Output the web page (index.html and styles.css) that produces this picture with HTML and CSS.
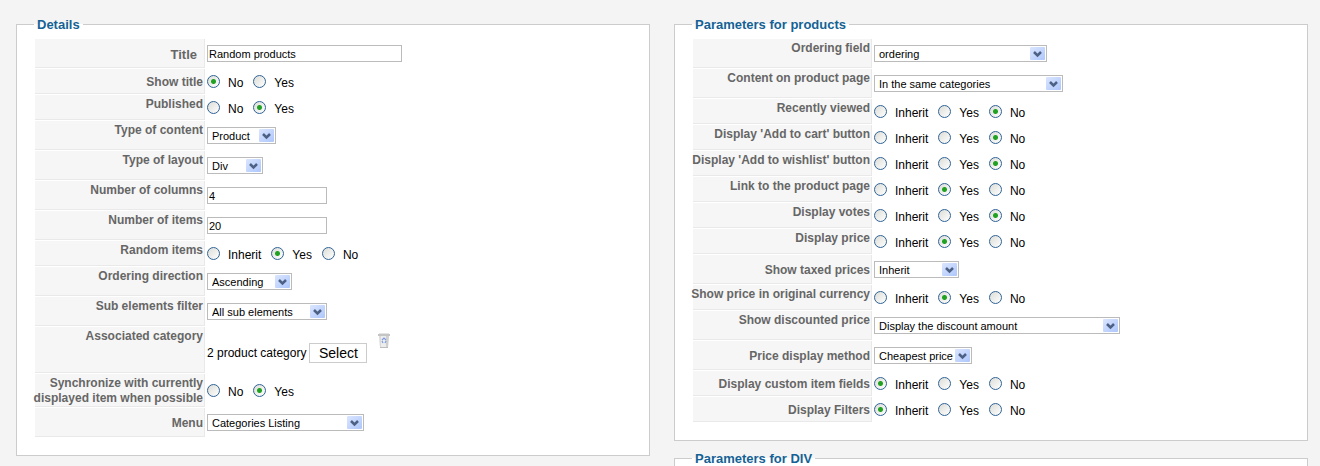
FILE: index.html
```html
<!DOCTYPE html>
<html lang="en">
<head>
  <meta charset="UTF-8">
  <meta name="viewport" content="width=device-width, initial-scale=1.0">
  <title>Module settings</title>
  <link rel="stylesheet" href="styles.css">
</head>
<body>
  <form class="columns">
    <div class="column">
      <fieldset class="panel details">
        <legend>Details</legend>
        <div class="params">
          <div class="row tall">
            <label class="key middle title-key" for="title">Title</label>
            <div class="value"><input class="text w-title" type="text" id="title" value="Random products"></div>
          </div>
          <div class="row" role="radiogroup" aria-labelledby="k-showtitle">
            <div class="key middle" id="k-showtitle">Show title</div>
            <div class="value">
              <label class="radio"><input type="radio" name="showtitle" checked><span>No</span></label>
              <label class="radio"><input type="radio" name="showtitle"><span>Yes</span></label>
            </div>
          </div>
          <div class="row" role="radiogroup" aria-labelledby="k-published">
            <div class="key" id="k-published">Published</div>
            <div class="value">
              <label class="radio"><input type="radio" name="published"><span>No</span></label>
              <label class="radio"><input type="radio" name="published" checked><span>Yes</span></label>
            </div>
          </div>
          <div class="row tall">
            <label class="key" for="content">Type of content</label>
            <div class="value"><select class="w-content" id="content"><option>Product</option></select></div>
          </div>
          <div class="row tall">
            <label class="key" for="layout">Type of layout</label>
            <div class="value"><select class="w-layout" id="layout"><option>Div</option></select></div>
          </div>
          <div class="row tall">
            <label class="key" for="columns">Number of columns</label>
            <div class="value"><input class="text" type="text" id="columns" value="4"></div>
          </div>
          <div class="row tall">
            <label class="key" for="items">Number of items</label>
            <div class="value"><input class="text" type="text" id="items" value="20"></div>
          </div>
          <div class="row" role="radiogroup" aria-labelledby="k-random">
            <div class="key" id="k-random">Random items</div>
            <div class="value">
              <label class="radio"><input type="radio" name="random"><span>Inherit</span></label>
              <label class="radio"><input type="radio" name="random" checked><span>Yes</span></label>
              <label class="radio"><input type="radio" name="random"><span>No</span></label>
            </div>
          </div>
          <div class="row tall">
            <label class="key" for="direction">Ordering direction</label>
            <div class="value"><select class="w-direction" id="direction"><option>Ascending</option></select></div>
          </div>
          <div class="row tall">
            <label class="key" for="filter">Sub elements filter</label>
            <div class="value"><select class="w-filter" id="filter"><option>All sub elements</option></select></div>
          </div>
          <div class="row">
            <div class="key">Associated category</div>
            <div class="value category">
              <span>2 product category</span>
              <button type="button" class="select-button">Select</button>
              <button type="button" class="delete-button" aria-label="Delete">
                <svg width="12" height="16" viewBox="0 0 12 16">
                  <path d="M1 2h10l-1 13H2z" fill="#ececec"/>
                  <path d="M8 2h3l-1 13H8z" fill="#cfcfcf"/>
                  <path d="M1 2h2v13H2z" fill="#dadada"/>
                  <path d="M2 14h8v1H2z" fill="#bcbcbc"/>
                  <path d="M0 1h12v2H0z" fill="#c4c4c4"/>
                  <path d="M1 0h10v1H1z" fill="#e4e4e4"/>
                  <path d="M4 7l2-2 2 2M8 8l-1 2M5 10L4 8" fill="none" stroke="#7f9be0" stroke-width="1.200"/>
                </svg>
              </button>
            </div>
          </div>
          <div class="row" role="radiogroup" aria-labelledby="k-sync">
            <div class="key" id="k-sync">Synchronize with currently<br>displayed item when possible</div>
            <div class="value">
              <label class="radio"><input type="radio" name="sync"><span>No</span></label>
              <label class="radio"><input type="radio" name="sync" checked><span>Yes</span></label>
            </div>
          </div>
          <div class="row tall">
            <label class="key middle" for="menu">Menu</label>
            <div class="value"><select class="w-menu" id="menu"><option>Categories Listing</option></select></div>
          </div>
        </div>
      </fieldset>
    </div>

    <div class="column">
      <fieldset class="panel products">
        <legend>Parameters for products</legend>
        <div class="params">
          <div class="row tall">
            <label class="key" for="ordering">Ordering field</label>
            <div class="value"><select class="w-ordering" id="ordering"><option>ordering</option></select></div>
          </div>
          <div class="row tall">
            <label class="key" for="productpage">Content on product page</label>
            <div class="value"><select class="w-productpage" id="productpage"><option>In the same categories</option></select></div>
          </div>
          <div class="row" role="radiogroup" aria-labelledby="k-recent">
            <div class="key" id="k-recent">Recently viewed</div>
            <div class="value">
              <label class="radio"><input type="radio" name="recent"><span>Inherit</span></label>
              <label class="radio"><input type="radio" name="recent"><span>Yes</span></label>
              <label class="radio"><input type="radio" name="recent" checked><span>No</span></label>
            </div>
          </div>
          <div class="row" role="radiogroup" aria-labelledby="k-cart">
            <div class="key" id="k-cart">Display 'Add to cart' button</div>
            <div class="value">
              <label class="radio"><input type="radio" name="cart"><span>Inherit</span></label>
              <label class="radio"><input type="radio" name="cart"><span>Yes</span></label>
              <label class="radio"><input type="radio" name="cart" checked><span>No</span></label>
            </div>
          </div>
          <div class="row" role="radiogroup" aria-labelledby="k-wishlist">
            <div class="key" id="k-wishlist">Display 'Add to wishlist' button</div>
            <div class="value">
              <label class="radio"><input type="radio" name="wishlist"><span>Inherit</span></label>
              <label class="radio"><input type="radio" name="wishlist"><span>Yes</span></label>
              <label class="radio"><input type="radio" name="wishlist" checked><span>No</span></label>
            </div>
          </div>
          <div class="row" role="radiogroup" aria-labelledby="k-link">
            <div class="key" id="k-link">Link to the product page</div>
            <div class="value">
              <label class="radio"><input type="radio" name="link"><span>Inherit</span></label>
              <label class="radio"><input type="radio" name="link" checked><span>Yes</span></label>
              <label class="radio"><input type="radio" name="link"><span>No</span></label>
            </div>
          </div>
          <div class="row" role="radiogroup" aria-labelledby="k-votes">
            <div class="key" id="k-votes">Display votes</div>
            <div class="value">
              <label class="radio"><input type="radio" name="votes"><span>Inherit</span></label>
              <label class="radio"><input type="radio" name="votes"><span>Yes</span></label>
              <label class="radio"><input type="radio" name="votes" checked><span>No</span></label>
            </div>
          </div>
          <div class="row" role="radiogroup" aria-labelledby="k-price">
            <div class="key" id="k-price">Display price</div>
            <div class="value">
              <label class="radio"><input type="radio" name="price"><span>Inherit</span></label>
              <label class="radio"><input type="radio" name="price" checked><span>Yes</span></label>
              <label class="radio"><input type="radio" name="price"><span>No</span></label>
            </div>
          </div>
          <div class="row tall">
            <label class="key middle" for="taxed">Show taxed prices</label>
            <div class="value"><select class="w-direction" id="taxed"><option>Inherit</option></select></div>
          </div>
          <div class="row" role="radiogroup" aria-labelledby="k-currency">
            <div class="key" id="k-currency">Show price in original currency</div>
            <div class="value">
              <label class="radio"><input type="radio" name="currency"><span>Inherit</span></label>
              <label class="radio"><input type="radio" name="currency" checked><span>Yes</span></label>
              <label class="radio"><input type="radio" name="currency"><span>No</span></label>
            </div>
          </div>
          <div class="row tall">
            <label class="key" for="discount">Show discounted price</label>
            <div class="value"><select class="w-discount" id="discount"><option>Display the discount amount</option></select></div>
          </div>
          <div class="row tall">
            <label class="key middle" for="method">Price display method</label>
            <div class="value"><select class="w-method" id="method"><option>Cheapest price</option></select></div>
          </div>
          <div class="row" role="radiogroup" aria-labelledby="k-custom">
            <div class="key middle" id="k-custom">Display custom item fields</div>
            <div class="value">
              <label class="radio"><input type="radio" name="custom" checked><span>Inherit</span></label>
              <label class="radio"><input type="radio" name="custom"><span>Yes</span></label>
              <label class="radio"><input type="radio" name="custom"><span>No</span></label>
            </div>
          </div>
          <div class="row" role="radiogroup" aria-labelledby="k-filters">
            <div class="key middle" id="k-filters">Display Filters</div>
            <div class="value">
              <label class="radio"><input type="radio" name="filters" checked><span>Inherit</span></label>
              <label class="radio"><input type="radio" name="filters"><span>Yes</span></label>
              <label class="radio"><input type="radio" name="filters"><span>No</span></label>
            </div>
          </div>
        </div>
      </fieldset>

      <fieldset class="panel empty">
        <legend>Parameters for DIV</legend>
      </fieldset>
    </div>
  </form>
</body>
</html>
```

FILE: styles.css
```css
* { margin: 0; padding: 0; box-sizing: border-box; }
body {
  background-color: #f4f4f4;
  color: #000;
  font-family: Arial, "Liberation Sans", sans-serif;
  font-size: 12px;
  line-height: 15px;
}
.columns {
  display: grid;
  grid-template-columns: 1fr 1fr;
  gap: 24px;
  align-items: start;
  padding: 17px 12px 0 16px;
}
.column {
  display: flex;
  flex-direction: column;
  gap: 10px;
  min-width: 0;
}

/* Panels */
.panel {
  min-width: 0;
  padding: 6px 17px 17px;
  background-color: #fff;
  border: 1px solid #ccc;
}
.panel legend {
  padding: 0 3px;
  color: #146295;
  font-size: 13px;
  font-weight: bold;
}
.panel.empty {
  padding: 0 17px;
  border-bottom: none;
}

/* Rows */
.params {
  display: flex;
  flex-direction: column;
  gap: 1px;
  padding: 1px;
}
.row {
  display: grid;
  grid-template-columns: 170px 1fr;
  gap: 2px;
  min-height: 25px;
}
.products .row { grid-template-columns: 179px 1fr; }
.row.tall { min-height: 29px; }
.key {
  display: flex;
  justify-content: flex-end;
  padding: 2px 1px 0 0;
  background-color: #f6f6f6;
  border-right: 1px solid #e9e9e9;
  border-bottom: 1px solid #e9e9e9;
  color: #666;
  font-weight: bold;
  text-align: right;
  white-space: nowrap;
}
.key.middle { align-items: center; }
.title-key {
  padding-right: 7px;
  font-size: 13px;
}
.value {
  display: flex;
  align-items: center;
}
.category {
  gap: 3px;
  padding: 6px 0 0;
}

/* Controls */
.text, select {
  height: 17px;
  border: 1px solid #bbb;
  border-radius: 0;
  background-color: #fff;
  color: #000;
  font-family: inherit;
  font-size: 11px;
}
.text {
  width: 120px;
  padding: 0 1px;
}
select {
  appearance: none;
  padding: 0 16px 0 4px;
  background-image: url("data:image/svg+xml,%3Csvg xmlns='http://www.w3.org/2000/svg' width='15' height='13'%3E%3ClinearGradient id='g' x2='1' y2='1'%3E%3Cstop stop-color='%23dbe6ff'/%3E%3Cstop offset='1' stop-color='%23adc6fb'/%3E%3C/linearGradient%3E%3Crect width='15' height='13' rx='1' fill='url(%23g)'/%3E%3Cpath d='M4 5l3.500 3.500L11 5' fill='none' stroke='%234d6185' stroke-width='2.500'/%3E%3C/svg%3E");
  background-repeat: no-repeat;
  background-position: right 1px center;
}
.w-title { width: 195px; }
.w-content { width: 69px; }
.w-layout { width: 56px; }
.w-direction { width: 85px; }
.w-filter { width: 120px; }
.w-menu { width: 157px; }
.w-ordering { width: 173px; }
.w-productpage { width: 189px; }
.w-discount { width: 246px; }
.w-method { width: 98px; }

.radio {
  display: flex;
  align-items: center;
  gap: 8px;
  margin-right: 10px;
}
.radio span { padding-top: 3px; }
.radio input {
  appearance: none;
  width: 13px;
  height: 13px;
  border: 1px solid #2f6396;
  border-radius: 50%;
  background: linear-gradient(135deg, #dcdcd7, #fff);
}
.radio input:checked {
  background: radial-gradient(circle, #21a121 2px, transparent 3px), linear-gradient(135deg, #dcdcd7, #fff);
}
.select-button {
  width: 58px;
  height: 20px;
  border: 1px solid #ccc;
  background-color: #fff;
  color: #000;
  font-family: inherit;
  font-size: 14px;
}
.delete-button {
  align-self: flex-start;
  height: 40px;
  margin-left: 8px;
  border: none;
  background: none;
}
.delete-button svg {
  display: block;
  margin-bottom: 24px;
}
```
